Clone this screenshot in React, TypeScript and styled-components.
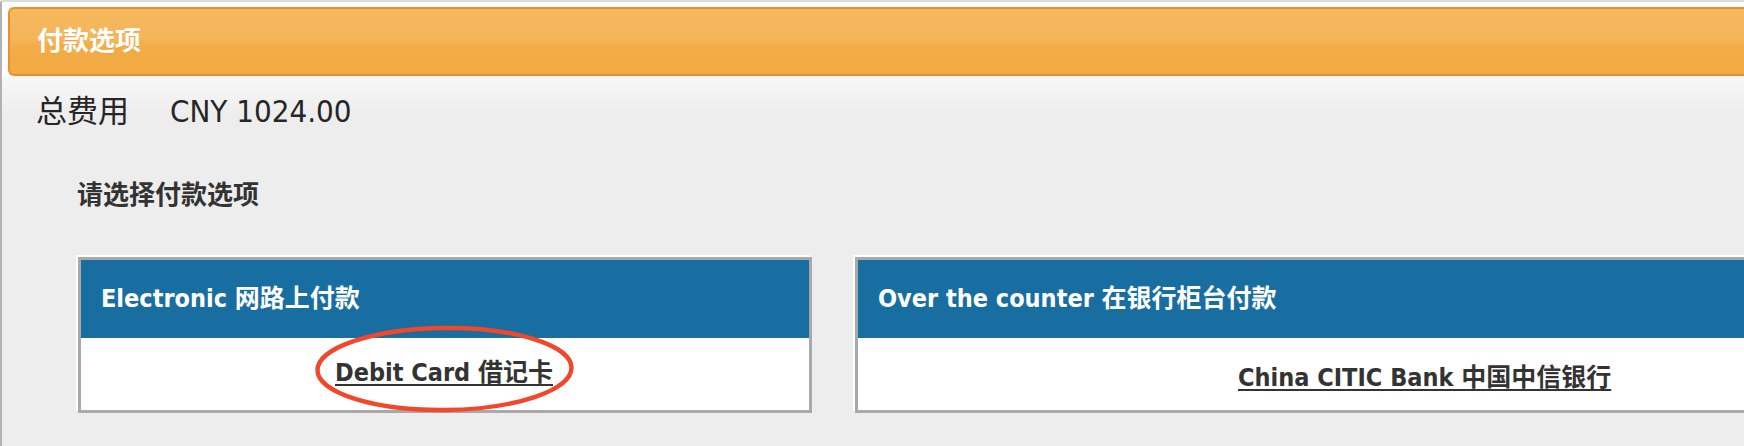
import React from "react";
import styled, { createGlobalStyle } from "styled-components";

const GlobalStyle = createGlobalStyle`
  html, body {
    margin: 0;
    padding: 0;
    background: #ededed;
    overflow: hidden;
  }
  body {
    font-family: "DejaVu Sans Condensed", "DejaVu Sans", "Noto Sans CJK SC", sans-serif;
    font-stretch: condensed;
  }
`;

const Panel = styled.div`
  width: 1900px;
  height: 446px;
  box-sizing: border-box;
  border-top: 2px solid #dcdcdc;
  border-left: 2px solid #b2b2b2;
  border-top-left-radius: 3px;
  padding: 5px 0 0 6px;
  background: linear-gradient(
    to bottom,
    #ffffff 0,
    #ffffff 74px,
    #f8f8f8 74px,
    #ededed 112px,
    #ededed 100%
  );
`;

const Header = styled.div`
  height: 65px;
  line-height: 65px;
  border: 2px solid #e8912c;
  border-right: none;
  border-radius: 6px 0 0 6px;
  padding-left: 27px;
  background: linear-gradient(
    to bottom,
    #f6b95e 0%,
    #f5b55a 45%,
    #f3ad46 58%,
    #f2aa42 100%
  );
  color: #ffffff;
  font-size: 26px;
  font-weight: bold;
  text-shadow: 0 1px 0 rgba(150, 80, 0, 0.12);
`;

const TotalRow = styled.div`
  display: flex;
  align-items: baseline;
  gap: 41px;
  margin-top: 15px;
  padding-left: 28px;
  height: 40px;
  line-height: 40px;
  color: #262626;
`;

const TotalLabel = styled.span`
  font-size: 31px;
`;

const TotalAmount = styled.span`
  font-size: 31px;
`;

const SubHeading = styled.div`
  margin-top: 44px;
  padding-left: 69px;
  height: 40px;
  line-height: 40px;
  font-size: 26px;
  font-weight: bold;
  color: #333333;
`;

const CardRow = styled.div`
  display: flex;
  gap: 43px;
  margin-top: 42px;
  padding-left: 70px;
`;

const Card = styled.div<{ $width?: number }>`
  box-sizing: border-box;
  border: 3px solid #a9a9a9;
  box-shadow: -2px -2px 0 #ffffff;
  background: #ffffff;
  ${(p) => (p.$width ? `width: ${p.$width}px; flex: none;` : `flex: 1;`)}
`;

const CardHeader = styled.div`
  height: 78px;
  line-height: 78px;
  padding-left: 20px;
  background: #186da1;
  color: #ffffff;
  font-size: 25px;
  font-weight: bold;
`;

const CardBody = styled.div<{ $indent: number; $drop: number }>`
  box-sizing: border-box;
  height: 72px;
  display: flex;
  align-items: center;
  padding-left: ${(p) => p.$indent}px;
  padding-top: ${(p) => p.$drop}px;
`;

const LinkWrap = styled.span`
  position: relative;
  display: inline-block;
  line-height: 30px;
`;

const OptionLink = styled.a`
  color: #333333;
  font-size: 25px;
  font-weight: bold;
  text-decoration: underline;
  text-decoration-thickness: 2px;
  text-underline-offset: 3px;
  cursor: pointer;
`;

const Circle = styled.svg`
  position: absolute;
  left: -22px;
  top: -34px;
  width: 263px;
  height: 90px;
  pointer-events: none;
  overflow: visible;
`;

const HandCircle = () => (
  <Circle viewBox="0 0 263 90">
    <ellipse
      cx="131.5"
      cy="45"
      rx="127"
      ry="41"
      fill="none"
      stroke="#f1472a"
      strokeWidth="4.4"
      transform="rotate(-0.6 131.5 45)"
    />
  </Circle>
);

export default function App() {
  return (
    <>
      <GlobalStyle />
      <Panel>
        <Header>付款选项</Header>
        <TotalRow>
          <TotalLabel>总费用</TotalLabel>
          <TotalAmount>CNY 1024.00</TotalAmount>
        </TotalRow>
        <SubHeading>请选择付款选项</SubHeading>
        <CardRow>
          <Card $width={734}>
            <CardHeader>Electronic 网路上付款</CardHeader>
            <CardBody $indent={254} $drop={0}>
              <LinkWrap>
                <OptionLink>Debit Card 借记卡</OptionLink>
                <HandCircle />
              </LinkWrap>
            </CardBody>
          </Card>
          <Card>
            <CardHeader>Over the counter 在银行柜台付款</CardHeader>
            <CardBody $indent={380} $drop={10}>
              <LinkWrap>
                <OptionLink>China CITIC Bank 中国中信银行</OptionLink>
              </LinkWrap>
            </CardBody>
          </Card>
        </CardRow>
      </Panel>
    </>
  );
}
